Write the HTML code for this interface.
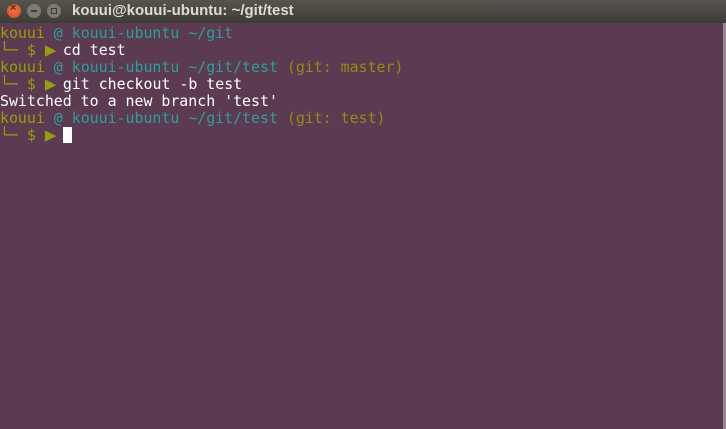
<!DOCTYPE html>
<html><head><style>
html,body{margin:0;padding:0;width:726px;height:429px;overflow:hidden;background:#5c3a52;}
#tb{position:absolute;left:0;top:0;width:726px;height:23px;background:linear-gradient(#56544d,#3d3c37);}
#tb .t{position:absolute;left:72px;top:2px;font:bold 15px "Liberation Sans",sans-serif;color:#dfdbd2;}
.b{position:absolute;top:4px;width:14px;height:14px;border-radius:50%;}
#term{position:absolute;left:0;top:25px;font:14.9px/17px "DejaVu Sans Mono","Liberation Mono",monospace;color:#fff;white-space:pre;}
.g{color:#94a00b}.c{color:#2aa198}.y{color:#8f8f12}
.a{display:inline-block;width:18px;color:#94a00b;font-size:19px;line-height:17px;vertical-align:-1px;}
#sb{position:absolute;right:0;top:23px;width:3px;height:406px;background:#9a8896;}
#cur{display:inline-block;width:9px;height:16px;background:#fff;vertical-align:-3px;}
</style></head><body>
<div id="tb">
<div class="b" style="left:7px;background:radial-gradient(circle at 50% 40%,#f07a4d,#d3461b);"><span style="position:absolute;left:3px;top:-2px;font:bold 11px 'Liberation Sans';color:#5a2a10">×</span></div>
<div class="b" style="left:27px;background:#7b7a73;"><span style="position:absolute;left:4px;top:6px;width:6px;height:2px;background:#3d3c37"></span></div>
<div class="b" style="left:47px;background:#7b7a73;"><span style="position:absolute;left:4px;top:4px;width:4px;height:4px;border:1px solid #3d3c37"></span></div>
<div class="t">kouui@kouui-ubuntu: ~/git/test</div>
</div>
<div id="term"><span class="g">kouui</span> <span class="c">@ kouui-ubuntu ~/git</span>
<span class="g">└─ $ </span><span class="a">▶</span>cd test
<span class="g">kouui</span> <span class="c">@ kouui-ubuntu ~/git/test</span> <span class="y">(git: master)</span>
<span class="g">└─ $ </span><span class="a">▶</span>git checkout -b test
Switched to a new branch 'test'
<span class="g">kouui</span> <span class="c">@ kouui-ubuntu ~/git/test</span> <span class="y">(git: test)</span>
<span class="g">└─ $ </span><span class="a">▶</span><span id="cur"></span></div>
<div id="sb"></div>
</body></html>
